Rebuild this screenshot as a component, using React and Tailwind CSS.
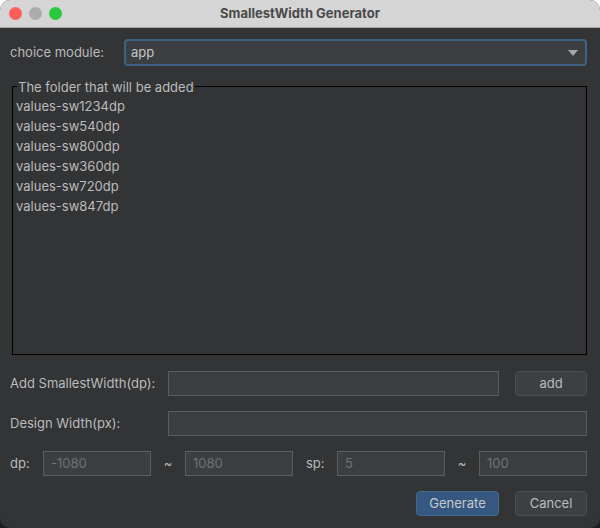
const folders = [
  "values-sw1234dp",
  "values-sw540dp",
  "values-sw800dp",
  "values-sw360dp",
  "values-sw720dp",
  "values-sw847dp",
];

function Field({ className = "", value = "" }) {
  return (
    <div
      className={`h-[25px] bg-[#3c3f41] border border-[#5b5d5f] px-[7px] flex items-center text-[#6f7173] ${className}`}
    >
      {value}
    </div>
  );
}

function Btn({ children, primary, className = "" }) {
  return (
    <div
      className={`h-[25px] rounded-[4px] flex items-center justify-center border ${
        primary
          ? "bg-[#365880] border-[#44698f] text-[#c4c8cc]"
          : "bg-[#3d4043] border-[#4c4f52] text-[#bbbbbb]"
      } ${className}`}
    >
      {children}
    </div>
  );
}

export default function App() {
  return (
    <div className="w-[600px] h-[528px] bg-[linear-gradient(to_bottom,white_50%,#1e1f20_50%)] font-['Inter','Liberation_Sans',sans-serif] text-[13px]">
      <div className="w-full h-full rounded-[10px] overflow-hidden flex flex-col bg-[#323436]">
        {/* Title bar */}
        <div className="h-[28px] shrink-0 bg-[#d5d5d5] border-b border-[#a9a9a9] flex items-center relative">
          <div className="flex gap-[7px] pl-[9px]">
            <span className="w-[13px] h-[13px] rounded-full bg-[#fe5f57]" />
            <span className="w-[13px] h-[13px] rounded-full bg-[#acacac]" />
            <span className="w-[13px] h-[13px] rounded-full bg-[#2ac840]" />
          </div>
          <div className="absolute inset-0 flex items-center justify-center font-bold text-[#4a4a4a] text-[13px]">
            SmallestWidth Generator
          </div>
        </div>

        <div className="flex-1 flex flex-col pl-[10px] pr-[13px] text-[#bbbbbb]">
          {/* choice module */}
          <div className="flex items-center mt-[11px] h-[27px]">
            <span className="w-[114px]">choice module:</span>
            <div className="flex-1 h-[27px] rounded-[4px] border-2 border-[#3e6286] bg-[#3c3f41] flex items-center pl-[5px] pr-[7px]">
              <span className="flex-1 text-[#c4c4c4]">app</span>
              <svg width="10" height="6" viewBox="0 0 10 6">
                <path d="M0 0h10L5 6z" fill="#a8a8a8" />
              </svg>
            </div>
          </div>

          {/* folder list */}
          <div className="relative mt-[20px] ml-[2px] h-[269px] border border-black pt-[9px] px-[3px]">
            <span className="absolute -top-[9px] left-[4px] bg-[#323436] px-[1px] leading-[18px]">
              The folder that will be added
            </span>
            <div className="flex flex-col">
              {folders.map((f) => (
                <div key={f} className="h-[20px] leading-[20px]">
                  {f}
                </div>
              ))}
            </div>
          </div>

          {/* add row */}
          <div className="flex items-center mt-[16px]">
            <span className="w-[158px]">Add SmallestWidth(dp):</span>
            <Field className="w-[331px]" />
            <Btn className="ml-[16px] flex-1">add</Btn>
          </div>

          {/* design width */}
          <div className="flex items-center mt-[15px]">
            <span className="w-[158px]">Design Width(px):</span>
            <Field className="flex-1" />
          </div>

          {/* dp / sp */}
          <div className="flex items-center mt-[15px]">
            <span className="w-[33px]">dp:</span>
            <Field className="w-[108px]" value="-1080" />
            <span className="w-[34px] text-center">~</span>
            <Field className="w-[108px]" value="1080" />
            <span className="w-[44px] pl-[13px]">sp:</span>
            <Field className="w-[108px]" value="5" />
            <span className="w-[34px] text-center">~</span>
            <Field className="flex-1" value="100" />
          </div>

          {/* buttons */}
          <div className="flex justify-end mt-[15px] gap-[16px]">
            <Btn primary className="w-[83px]">Generate</Btn>
            <Btn className="w-[72px]">Cancel</Btn>
          </div>
        </div>
      </div>
    </div>
  );
}
